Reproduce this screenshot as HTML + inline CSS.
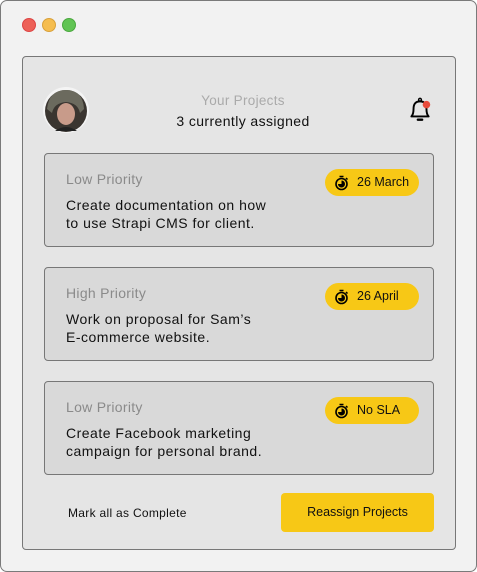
<!DOCTYPE html>
<html><head><style>
*{margin:0;padding:0;box-sizing:border-box}
body{width:477px;height:572px;background:#fff;font-family:"Liberation Sans",sans-serif;position:relative;overflow:hidden}
.win{position:absolute;left:0;top:0;width:477px;height:572px;background:#f2f2f2;border:1.5px solid #7a7a7a;border-radius:7px}
.dot{position:absolute;top:17px;width:14px;height:14px;border-radius:50%}
.panel{position:absolute;left:22px;top:56px;width:434px;height:494px;background:#e5e5e5;border:1px solid #777;border-radius:4px}
.card{position:absolute;left:44px;width:390px;height:94px;background:#d9d9d9;border:1px solid #777;border-radius:4px}
.pri{position:absolute;left:21px;top:17px;font-size:14px;color:#8a8a8a;letter-spacing:0.3px}
.desc{position:absolute;left:21px;top:42px;font-size:14px;line-height:18px;color:#111;letter-spacing:0.5px}
.badge{position:absolute;left:280px;top:15px;width:94px;height:27px;background:#f7c816;border-radius:14px;font-size:12.5px;color:#111;line-height:27px;padding-left:32px}
.badge svg{position:absolute;left:9px;top:6px}
.t{position:absolute;text-align:center;width:240px;left:123px}
</style></head><body>
<div class="win">
<div class="dot" style="left:21px;background:#ed6158;border:1px solid #d44"></div>
<div class="dot" style="left:41px;background:#f5bd4f;border:1px solid #d9a13a"></div>
<div class="dot" style="left:61px;background:#61c454;border:1px solid #4aa83e"></div>
</div>
<div class="panel"></div>
<svg style="position:absolute;left:43px;top:87px" width="46" height="46"><circle cx="23" cy="23" r="23" fill="#f4f4f4"/><circle cx="23" cy="24" r="21" fill="#3a3530"/><path d="M4 22 Q6 3 23 3 Q40 3 41 22 L37 26 Q35 16 23 15 Q11 16 9 26Z" fill="#6b6a5e"/><ellipse cx="23" cy="27" rx="9" ry="11" fill="#c89b8a"/><path d="M12 44 Q23 36 34 44" fill="#222"/></svg>
<div class="t" style="top:93px;font-size:13.5px;color:#aaa;letter-spacing:0.3px">Your Projects</div>
<div class="t" style="top:113px;font-size:14px;color:#111;letter-spacing:0.4px">3 currently assigned</div>
<svg style="position:absolute;left:407px;top:96px" width="26" height="28" viewBox="0 0 24 26"><path d="M4 19 Q6 17 6 12 Q6 5 12 5 Q18 5 18 12 Q18 17 20 19Z" fill="none" stroke="#000" stroke-width="1.8" stroke-linejoin="round"/><circle cx="12" cy="3.5" r="1.3" fill="none" stroke="#000" stroke-width="1.3"/><path d="M10 22 h4" stroke="#000" stroke-width="2.2" stroke-linecap="round"/><circle cx="18" cy="8" r="3.5" fill="#e84b3c"/></svg>

<div class="card" style="top:153px"><div class="pri">Low Priority</div><div class="desc">Create documentation on how<br>to use Strapi CMS for client.</div><div class="badge"><svg width="16" height="16" viewBox="0 0 16 16"><circle cx="7.5" cy="9" r="5.5" fill="none" stroke="#000" stroke-width="1.6"/><path d="M7.5 9 V5.5 A3.5 3.5 0 1 1 4 9Z" fill="#000"/><path d="M5.5 1.5h4M12 3l1.5 1.5" stroke="#000" stroke-width="1.5"/></svg>26 March</div></div>
<div class="card" style="top:267px"><div class="pri">High Priority</div><div class="desc">Work on proposal for Sam’s<br>E-commerce website.</div><div class="badge"><svg width="16" height="16" viewBox="0 0 16 16"><circle cx="7.5" cy="9" r="5.5" fill="none" stroke="#000" stroke-width="1.6"/><path d="M7.5 9 V5.5 A3.5 3.5 0 1 1 4 9Z" fill="#000"/><path d="M5.5 1.5h4M12 3l1.5 1.5" stroke="#000" stroke-width="1.5"/></svg>26 April</div></div>
<div class="card" style="top:381px"><div class="pri">Low Priority</div><div class="desc">Create Facebook marketing<br>campaign for personal brand.</div><div class="badge"><svg width="16" height="16" viewBox="0 0 16 16"><circle cx="7.5" cy="9" r="5.5" fill="none" stroke="#000" stroke-width="1.6"/><path d="M7.5 9 V5.5 A3.5 3.5 0 1 1 4 9Z" fill="#000"/><path d="M5.5 1.5h4M12 3l1.5 1.5" stroke="#000" stroke-width="1.5"/></svg>No SLA</div></div>

<div style="position:absolute;left:68px;top:506px;font-size:12px;color:#111;letter-spacing:0.3px">Mark all as Complete</div>
<div style="position:absolute;left:281px;top:493px;width:153px;height:39px;background:#f7c816;border-radius:4px;font-size:12.5px;color:#111;text-align:center;line-height:39px">Reassign Projects</div>
</body></html>
